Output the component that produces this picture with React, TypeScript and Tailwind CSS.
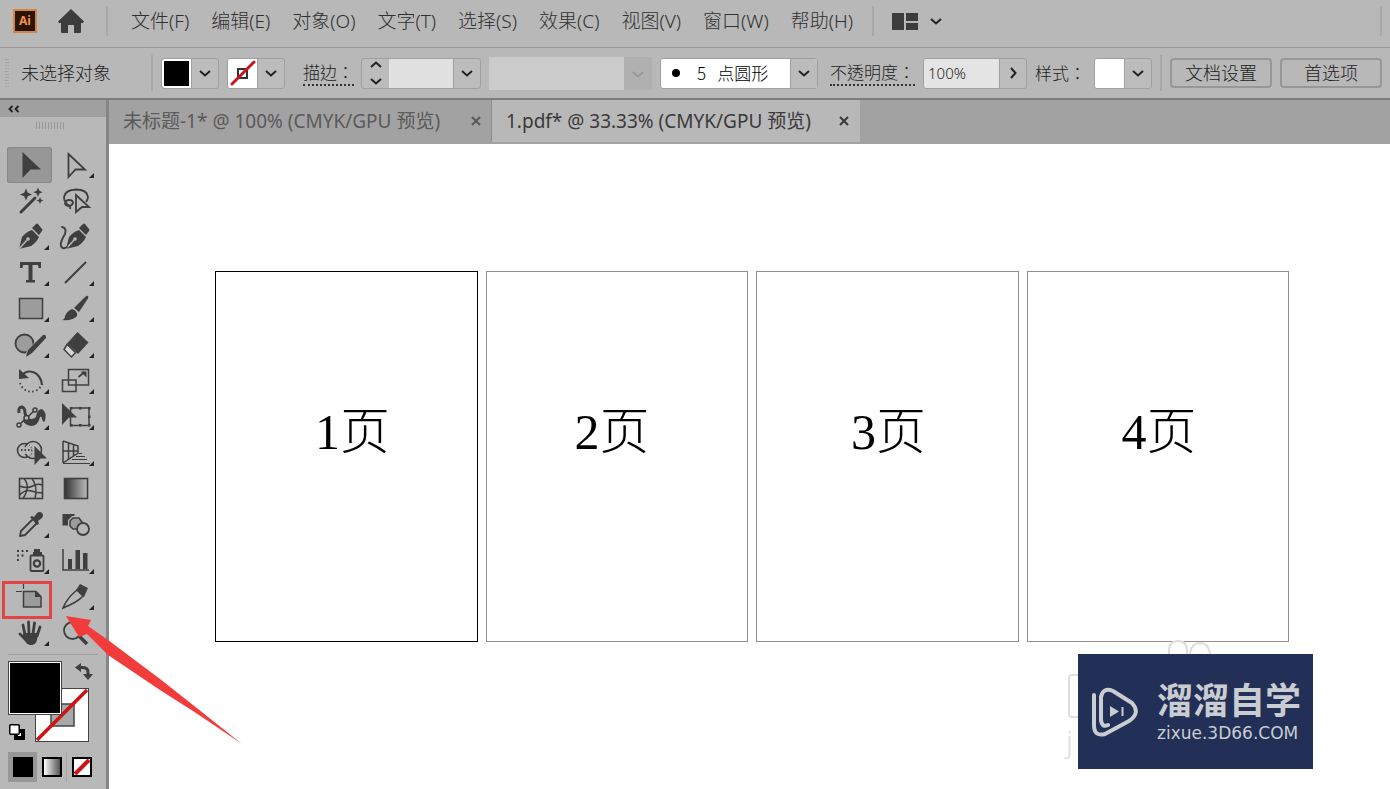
import type { ReactNode } from "react";
import { clsx } from "clsx";

const menuItems = [
  "文件(F)",
  "编辑(E)",
  "对象(O)",
  "文字(T)",
  "选择(S)",
  "效果(C)",
  "视图(V)",
  "窗口(W)",
  "帮助(H)",
];

const artboards = [
  { label: "1页", position: "left-[99px]", active: true },
  { label: "2页", position: "left-[88px]", active: false },
  { label: "3页", position: "left-[94px]", active: false },
  { label: "4页", position: "left-[94px]", active: false },
];

type Tool = { name: string; icon: ReactNode; more?: boolean };

const dark = "#3f3f3f";
const mid = "#9c9c9c";
const panel = "#b8b8b8";

const penShape = (
  <>
    <path d="M12 30 15 18Q19 13 25 11L32 18Q29 24 24 27Z" fill={dark} />
    <path d="m25 9 4-4q1-1 2 0l4 5q1 1 0 2l-3 4Z" fill={dark} />
    <path d="M12 30 20 21" stroke={panel} strokeWidth="1.5" />
    <circle cx="21" cy="20" r="1.8" fill={panel} />
  </>
);

// Every icon is drawn on a 45 x 36 cell
const tools: Tool[] = [
  {
    name: "选择工具",
    icon: <path d="M15.5 5 34 22.5H23.5L15.5 31Z" fill={dark} />,
  },
  {
    name: "直接选择工具",
    more: true,
    icon: <path d="M16.5 7 33 22.5H23.5L16.5 30Z" stroke={dark} strokeWidth="1.8" />,
  },
  {
    name: "魔棒工具",
    icon: (
      <>
        <path d="M14 29 28 15" stroke={dark} strokeWidth="3" strokeLinecap="round" />
        <path
          d="m19 5.500 1.800 4.200 4.200 1.800-4.200 1.800L19 17.500l-1.800-4.200-4.200-1.800 4.200-1.800ZM31 4.500l1.400 3.300 3.300 1.400-3.300 1.400L31 14l-1.400-3.400-3.300-1.400 3.300-1.400ZM33 14l1 2.500 2.500 1-2.500 1-1 2.500-1-2.500-2.500-1 2.500-1Z"
          fill={dark}
        />
      </>
    ),
  },
  {
    name: "套索工具",
    icon: (
      <>
        <path
          d="M18 23Q12 20 12 14 13 7 24 6.500 35 6.500 36 14 36 16 34 19M18 23q-5 0-5-3 1-3 4-3 4 0 4 3-1 3-5 3 3 0 2 3"
          stroke={dark}
          strokeWidth="1.8"
        />
        <path d="M24 12 37 24H30L24 29Z" stroke={dark} strokeWidth="1.8" />
      </>
    ),
  },
  { name: "钢笔工具", more: true, icon: penShape },
  {
    name: "曲率工具",
    icon: (
      <>
        <g transform="translate(2 0)">{penShape}</g>
        <path d="M10 8q5 1 3 7-5 8-4 12 2 4 6 1" stroke={dark} strokeWidth="2" strokeLinecap="round" />
      </>
    ),
  },
  {
    name: "文字工具",
    more: true,
    icon: <path d="M13 7H34V13H31.5L31 10H25.5V25H28V27.5H19V25H21.5V10H16L15.5 13H13Z" fill={dark} />,
  },
  {
    name: "直线段工具",
    more: true,
    icon: <path d="M13 28 34 7" stroke={dark} strokeWidth="2" />,
  },
  {
    name: "矩形工具",
    more: true,
    icon: <rect x="12.5" y="7.5" width="23" height="20" fill={mid} stroke={dark} strokeWidth="1.5" />,
  },
  {
    name: "画笔工具",
    more: true,
    icon: (
      <>
        <path d="m22 17 10-10q3-3 4-2t-1 4l-8 12Z" fill={dark} />
        <path d="M20 18q6 2 5 7-4 5-15 4 3-1 3-4 2-5 7-7Z" fill={dark} />
      </>
    ),
  },
  {
    name: "Shaper 工具",
    more: true,
    icon: (
      <>
        <circle cx="17.5" cy="16.5" r="9" fill={mid} stroke={dark} strokeWidth="1.8" />
        <path d="M38 10 22 28" stroke={panel} strokeWidth="8" />
        <path d="m36 8q3-1 3 3L25 26l-6 4 2-7Z" fill={dark} />
      </>
    ),
  },
  {
    name: "橡皮擦工具",
    more: true,
    icon: (
      <>
        <path d="M25.5 5 36.5 15.5 26 27 15 16.5Z" fill={dark} />
        <path d="m15 17.500 8.500 8-4 4.500L12 22.500Z" fill="#d6d6d6" stroke={dark} strokeWidth="1.5" />
      </>
    ),
  },
  {
    name: "旋转工具",
    more: true,
    icon: (
      <>
        <path d="M14 13q5-6 12-4 8 3 9 13" stroke={dark} strokeWidth="2.2" />
        <path d="M12 6v10l10-1Z" fill={dark} />
        <path d="M13 20a11.5 11.5 0 0 0 21 3" stroke={dark} strokeWidth="1.8" strokeDasharray="1.5 2.5" />
      </>
    ),
  },
  {
    name: "比例缩放工具",
    more: true,
    icon: (
      <>
        <path d="M16.500 6.500h20v15.500h-20ZM10.500 17h13.500v11.500h-13.500Z" stroke={dark} strokeWidth="1.5" />
        <path d="m26.500 14 6-5" stroke={dark} strokeWidth="1.8" />
        <path d="M28.500 8.500h6v6Z" fill={dark} />
      </>
    ),
  },
  {
    name: "宽度工具",
    more: true,
    icon: (
      <>
        <path d="M12 14q-1-6 3-6 3 1 3 6l2 6" stroke={dark} strokeWidth="3" />
        <path d="M18 18q7 4 11 0 1-8 6-8 5 3 3 12-2 2-3-2 0-3-2-2-2 9-9 9-6-1-8-5Z" fill={dark} />
        <path d="m13 25 14-13" stroke={dark} strokeWidth="1.6" />
        <circle cx="12" cy="26" r="2" fill={panel} stroke={dark} strokeWidth="1.5" />
        <circle cx="19.500" cy="19" r="2.500" fill={panel} stroke={dark} strokeWidth="1.5" />
        <circle cx="28" cy="11" r="2" fill={panel} stroke={dark} strokeWidth="1.5" />
      </>
    ),
  },
  {
    name: "自由变换工具",
    more: true,
    icon: (
      <>
        <rect x="18.5" y="9" width="18.500" height="17.500" stroke={dark} strokeWidth="1.5" />
        <path
          d="M18 8h2.500v2.500H18ZM27 8h2.500v2.500H27ZM36 8h2.500v2.500H36ZM36 16.500h2.500V19H36ZM36 25h2.500v2.500H36ZM27 25h2.500v2.500H27ZM18 25h2.500v2.500H18Z"
          fill={dark}
        />
        <path d="M10 4 25 18.5H17L10 26Z" fill={dark} />
      </>
    ),
  },
  {
    name: "形状生成器工具",
    more: true,
    icon: (
      <>
        <circle cx="17.5" cy="15.5" r="7" stroke={dark} strokeWidth="1.6" />
        <circle cx="26" cy="15" r="8.5" fill={panel} stroke={dark} strokeWidth="1.6" />
        <path d="M18 12q-1 3 0 7" stroke={panel} strokeWidth="3" />
        <path d="M19 9q6 1 6 7t-6 6" stroke={dark} strokeWidth="1" strokeDasharray="1.5 1.5" />
        <path d="M14 15h11" stroke={dark} strokeWidth="1.8" strokeDasharray="1.5 2" />
        <path d="M27.5 11 40 23.5H33.5L27.5 30Z" fill={dark} />
      </>
    ),
  },
  {
    name: "透视网格工具",
    more: true,
    icon: (
      <>
        <path d="M11 6v22M11 6l15 5v7L11 28M11 16h15M16.500 8v16M21.500 10v11" stroke={dark} strokeWidth="1.5" />
        <path d="M27 18.500h3M24 21.500h9M20 24.500h15M11 28.500h27" stroke={dark} strokeWidth="1" />
      </>
    ),
  },
  {
    name: "网格工具",
    icon: (
      <>
        <rect x="12.5" y="7.5" width="23" height="20" stroke={dark} strokeWidth="1.6" />
        <path
          d="M17 7.500q7 8-1 20M25 7.500q6 8 3 20M12.500 15q8 3 13 0t10-1M12.500 24q6-6 12-4t11 2"
          stroke={dark}
          strokeWidth="1.5"
        />
      </>
    ),
  },
  {
    name: "渐变工具",
    icon: (
      <>
        <defs>
          <linearGradient id="toolGradient">
            <stop offset="0" stopColor="#333333" />
            <stop offset="1" stopColor="#bdbdbd" />
          </linearGradient>
        </defs>
        <rect x="12.5" y="7.5" width="23" height="20" fill="url(#toolGradient)" stroke={dark} strokeWidth="1.6" />
      </>
    ),
  },
  {
    name: "吸管工具",
    more: true,
    icon: (
      <>
        <path d="m26 12-12 12-1 5 5-1 12-12" stroke={dark} strokeWidth="1.8" strokeLinejoin="round" />
        <path d="m23 10 2-1 2 1 3-4q3-2 5 0t0 5l-4 3 1 3-2 1Z" fill={dark} />
      </>
    ),
  },
  {
    name: "混合工具",
    icon: (
      <>
        <rect x="10.5" y="7" width="12" height="11.5" fill={dark} />
        <path d="m21 11 6 0 3 4v4l-3 3h-6l-3-3v-5Z" fill={mid} stroke={panel} strokeWidth="4" />
        <path d="m21 11 6 0 3 4v4l-3 3h-6l-3-3v-5Z" fill={mid} stroke={dark} strokeWidth="1.5" />
        <circle cx="31" cy="22" r="6" fill={panel} stroke={dark} strokeWidth="1.8" />
      </>
    ),
  },
  {
    name: "符号喷枪工具",
    more: true,
    icon: (
      <>
        <path
          d="M10 7h2v2h-2ZM14.500 7h2v2h-2ZM19 7h2v2h-2ZM10 11.500h2v2h-2ZM14.500 11.500h2v2h-2ZM10 16h2v2h-2Z"
          fill={dark}
        />
        <path d="M27 6h6v3h2v3h-9V9h1Z" fill={dark} />
        <rect x="23.5" y="12.5" width="13" height="15.5" rx="1" stroke={dark} strokeWidth="1.8" />
        <circle cx="30" cy="20.5" r="3.2" stroke={dark} strokeWidth="2.2" />
      </>
    ),
  },
  {
    name: "柱形图工具",
    more: true,
    icon: (
      <>
        <path d="M11 6v21h26" stroke={dark} strokeWidth="1.5" />
        <path d="M16 16h4v10h-4ZM23.500 7h4.500v19h-4.500ZM31 10h4.500v16H31Z" fill={dark} />
      </>
    ),
  },
  {
    name: "画板工具",
    icon: (
      <>
        <path d="M16.500 4v6M9 12.500h6" stroke={dark} strokeWidth="1.2" />
        <path d="M16.500 12.500H29l5 5v10.500H16.500Z" fill={mid} stroke={dark} strokeWidth="1.5" />
        <path d="M28 12v6h6.500Z" fill={dark} />
      </>
    ),
  },
  {
    name: "切片工具",
    more: true,
    icon: (
      <>
        <path d="m25 11 6 6q-5 6-20 12 4-10 14-18Z" stroke={dark} strokeWidth="1.6" />
        <path d="m24 11 4-6 8 4-4 9Z" fill={dark} />
      </>
    ),
  },
  {
    name: "抓手工具",
    more: true,
    icon: (
      <>
        <path
          d="m18 20-2-10M22 19 21.500 7M26 19l1.500-11M30 21l3-9M19 25l-6-6"
          stroke={dark}
          strokeWidth="2.8"
          strokeLinecap="round"
        />
        <path d="M17 18h14l-1 7q-1 5-6 5-4 0-6-4l-3-4Z" fill={dark} />
      </>
    ),
  },
  {
    name: "缩放工具",
    icon: (
      <>
        <circle cx="20.5" cy="15.5" r="8.5" stroke={dark} strokeWidth="1.8" />
        <path d="m27 21 8 8" stroke={dark} strokeWidth="3.5" />
      </>
    ),
  },
];

function Chevron({ className }: { className?: string }) {
  return (
    <svg viewBox="0 0 12 12" className={clsx("w-3 h-3 shrink-0", className)} fill="none">
      <path d="m1 4 5 4.500L11 4" stroke="currentColor" strokeWidth="2" />
    </svg>
  );
}

function ArrowButton({ label, className }: { label: string; className?: string }) {
  return (
    <button
      aria-label={label}
      className="w-[27px] h-full shrink-0 flex items-center justify-center border-l border-[#a0a0a0] text-[#222222]"
    >
      <Chevron className={className} />
    </button>
  );
}

function Divider({ className }: { className?: string }) {
  return <span className={clsx("w-[2px] shrink-0 bg-[#a8a8a8]", className)} />;
}

const boxClassName =
  "flex items-center h-[31px] border border-[#a0a0a0] rounded-[3px] bg-[#bcbcbc] shrink-0 overflow-hidden";

const labelClassName = "text-[17px] font-['Noto_Sans_CJK_TC',sans-serif]";

function MenuBar() {
  return (
    <header className="flex items-center h-12 pb-[5px] border-b border-[#999999]">
      <div className="ml-[13px] w-6 h-6 shrink-0 flex items-center justify-center border-2 border-[#d28645] bg-[#2c1403] text-[#f0924a] text-[12px] leading-none font-bold">
        Ai
      </div>
      <button aria-label="主页" className="ml-[21px]">
        <svg viewBox="0 0 26 24" className="w-[26px] h-6">
          <path d="M13 0 26 12.500 25 14H23v9q0 1-1 1H16v-8h-6v8H4q-1 0-1-1v-9H1L0 12.500Z" fill="#3c3c3c" />
        </svg>
      </button>
      <Divider className="h-[30px] ml-[22px]" />
      <nav className="flex gap-[22px] ml-[23px] text-[19px] leading-6 text-[#303030] whitespace-nowrap">
        {menuItems.map((item) => (
          <button key={item}>{item}</button>
        ))}
      </nav>
      <Divider className="h-[30px] ml-[19px]" />
      <button aria-label="排列文档" className="flex items-center gap-3 ml-[18px] text-[#222222]">
        <svg viewBox="0 0 26 17" className="w-[26px] h-[17px]">
          <path d="M0 0h12v17H0ZM14 0h12v8H14ZM14 10h12v7H14Z" fill="#3c3c3c" />
        </svg>
        <Chevron />
      </button>
      <Divider className="h-[30px] ml-auto mr-2" />
    </header>
  );
}

function ControlBar() {
  return (
    <section className="flex items-center h-[52px] border-b-2 border-[#7c7c7c] text-[#222222] text-[18px] leading-6 whitespace-nowrap">
      <span className="w-1 h-7 ml-[5px] shrink-0 bg-[repeating-linear-gradient(#a4a4a4_0_1px,transparent_1px_3px)]" />
      <span className="ml-3 w-[91px]">未选择对象</span>
      <Divider className="h-9 ml-[39px]" />

      <div className={clsx(boxClassName, "ml-2 w-[58px]")}>
        <button aria-label="填色" className="flex-1 h-full bg-black border-2 border-white" />
        <ArrowButton label="填色选项" />
      </div>
      <div className={clsx(boxClassName, "ml-2 w-[58px]")}>
        <button aria-label="描边颜色" className="flex-1 h-full bg-white">
          <svg viewBox="0 0 29 29" className="w-full h-full" fill="none">
            <rect x="10" y="10" width="9" height="9" stroke="#333333" strokeWidth="2" />
            <path d="M4 25 26 3" stroke="#c4161c" strokeWidth="3" strokeLinecap="round" />
          </svg>
        </button>
        <ArrowButton label="描边颜色选项" />
      </div>

      <label
        htmlFor="strokeWidth"
        className={clsx(labelClassName, "ml-[18px] border-b-2 border-dotted border-[#333333]")}
      >
        描边：
      </label>
      <div className={clsx(boxClassName, "ml-[7px] w-[120px]")}>
        <div className="flex flex-col items-center justify-center gap-1 w-[27px]">
          <button aria-label="增加描边粗细">
            <Chevron className="rotate-180" />
          </button>
          <button aria-label="减少描边粗细">
            <Chevron />
          </button>
        </div>
        <input id="strokeWidth" className="flex-1 min-w-0 h-full bg-[#e1e1e1]" />
        <ArrowButton label="描边粗细选项" />
      </div>

      <div className="relative ml-2 shrink-0 w-[163px]">
        <select
          disabled
          aria-label="变量宽度配置文件"
          className="appearance-none block w-full h-[33px] bg-[#cbcbcb] border-r-[28px] border-[#b0b0b0]"
        />
        <Chevron className="absolute right-2 top-[11px] text-[#999999]" />
      </div>

      <div className={clsx(boxClassName, "ml-2 w-[158px] bg-white")}>
        <span className="w-2 h-2 ml-[11px] shrink-0 rounded-full bg-black" />
        <select
          aria-label="画笔定义"
          className="appearance-none flex-1 min-w-0 h-full pl-[17px] bg-white text-black text-[17px] leading-6 font-['Noto_Sans_CJK_SC',sans-serif]"
        >
          <option>5&nbsp;&nbsp; 点圆形</option>
        </select>
        <span className="h-full bg-[#bcbcbc]">
          <ArrowButton label="画笔选项" />
        </span>
      </div>

      <label
        htmlFor="opacity"
        className={clsx(labelClassName, "ml-3 border-b-2 border-dotted border-[#333333]")}
      >
        不透明度：
      </label>
      <div className={clsx(boxClassName, "ml-2 w-[104px]")}>
        <input
          id="opacity"
          defaultValue="100%"
          className="flex-1 min-w-0 h-full pl-1 bg-[#e4e4e4] text-[15px]"
        />
        <ArrowButton label="不透明度选项" className="-rotate-90" />
      </div>

      <span className={clsx(labelClassName, "ml-2")}>样式：</span>
      <div className={clsx(boxClassName, "ml-2 w-[58px]")}>
        <button aria-label="图形样式" className="flex-1 h-full bg-white" />
        <ArrowButton label="图形样式选项" />
      </div>
      <Divider className="h-9 ml-2" />
      <button className="w-[102px] h-[30px] ml-2 shrink-0 border-2 border-[#979797] rounded-[4px] leading-6">
        文档设置
      </button>
      <button className="w-[102px] h-[30px] ml-2 shrink-0 border-2 border-[#979797] rounded-[4px] leading-6">
        首选项
      </button>
    </section>
  );
}

function ToolPanel() {
  return (
    <aside className="w-[109px] shrink-0 border-r-[3px] border-[#858585]">
      <div className="h-[17px] bg-[#a0a0a0] flex items-center pl-2">
        <button aria-label="折叠面板">
          <svg viewBox="0 0 12 8" className="w-3 h-2" fill="none">
            <path d="M4.500 1 1.500 4l3 3M10.500 1l-3 3 3 3" stroke="#222222" strokeWidth="1.8" />
          </svg>
        </button>
      </div>
      <div className="h-[30px] pt-[5px] pl-9">
        <div className="w-[30px] h-[7px] bg-[repeating-linear-gradient(90deg,#989898_0_1px,transparent_1px_3px)]" />
      </div>

      <div className="grid grid-cols-[45px_45px] ml-[7px]">
        {tools.map((tool, index) => (
          <button
            key={tool.name}
            aria-label={tool.name}
            className={clsx(
              "relative h-9",
              index === 0 && "bg-[#979797] rounded-[3px] ring-1 ring-inset ring-[#888888]"
            )}
          >
            <svg viewBox="0 0 45 36" className="w-[45px] h-9" fill="none">
              {tool.icon}
              {tool.more && <path d="M42 26v5h-5Z" fill="#222222" />}
            </svg>
            {tool.name === "画板工具" && (
              <span className="absolute -left-[5px] top-[2px] w-[50px] h-[38px] border-[3px] border-[#e24343]" />
            )}
          </button>
        ))}
      </div>

      <div className="mt-[3px] mx-2 border-t border-[#a0a0a0]" />

      <div className="relative mt-[6px] ml-2 h-[81px]">
        <button
          aria-label="描边"
          className="absolute left-[27px] top-[27px] w-[54px] h-[54px] bg-white border border-[#444444]"
        >
          <svg viewBox="0 0 52 52" className="w-full h-full" fill="none">
            <rect x="15" y="15" width="23" height="22" fill="#a8a8a8" stroke="#444444" strokeWidth="1.5" />
            <path d="M1 51 51 1" stroke="#cc1417" strokeWidth="3.5" />
          </svg>
        </button>
        <button
          aria-label="填色"
          className="absolute left-0 top-0 w-[54px] h-[54px] bg-black border border-[#444444] ring-1 ring-inset ring-white"
        />
        <button aria-label="互换填色和描边" className="absolute left-[67px] top-[2px]">
          <svg viewBox="0 0 18 17" className="w-[18px] h-[17px]" fill="none">
            <path d="M5 4.500h3q5 0 5 5v2" stroke={dark} strokeWidth="3" />
            <path d="M0 4.500 6 0v9ZM8 11h10l-5 6Z" fill={dark} />
          </svg>
        </button>
        <button aria-label="默认填色和描边" className="absolute left-[1px] top-[63px]">
          <svg viewBox="0 0 16 16" className="w-4 h-4">
            <path d="M5 5h11v11H5Z" fill="black" />
            <path d="M9 9h3v3H9Z" fill="white" />
            <rect x="0.75" y="0.75" width="9.5" height="9.5" rx="1" fill="white" stroke="black" strokeWidth="1.5" />
          </svg>
        </button>
      </div>

      <div className="flex mt-[10px] ml-2">
        <button aria-label="颜色" className="w-[29px] h-[30px] flex items-center justify-center bg-[#979797]">
          <span className="w-5 h-5 bg-black" />
        </button>
        <button aria-label="渐变" className="w-[30px] h-[30px] flex items-center justify-center border-r border-[#a8a8a8]">
          <span className="w-5 h-5 border-2 border-black bg-linear-to-r from-white to-[#555555]" />
        </button>
        <button aria-label="无" className="w-[30px] h-[30px] flex items-center justify-center">
          <svg viewBox="0 0 20 20" className="w-5 h-5">
            <rect x="1" y="1" width="18" height="18" fill="white" stroke="black" strokeWidth="2" />
            <path d="M3 17 17 3" stroke="#cc1417" strokeWidth="4" />
          </svg>
        </button>
      </div>
    </aside>
  );
}

function CloseIcon() {
  return (
    <svg viewBox="0 0 10 10" className="w-[10px] h-[10px]" fill="none">
      <path d="m1 1 8 8M9 1 1 9" stroke="currentColor" strokeWidth="2" />
    </svg>
  );
}

function DocumentTabs() {
  return (
    <div className="flex h-11 pb-[2px] bg-[#a2a2a2] text-[19px] leading-6 font-normal whitespace-nowrap">
      <div className="w-[382px] pl-[14px] pr-[10px] flex items-center justify-between text-[#5a5a5a]">
        <button>未标题-1* @ 100% (CMYK/GPU 预览)</button>
        <button aria-label="关闭 未标题-1">
          <CloseIcon />
        </button>
      </div>
      <div className="w-[369px] pl-[14px] pr-[11px] flex items-center justify-between bg-[#b8b8b8] border-l border-[#8e8e8e] text-[#3a3a3a]">
        <button>1.pdf* @ 33.33% (CMYK/GPU 预览)</button>
        <button aria-label="关闭 1.pdf">
          <CloseIcon />
        </button>
      </div>
    </div>
  );
}

function Watermark() {
  return (
    <div className="absolute right-[77px] bottom-5">
      <svg viewBox="0 0 150 120" className="absolute -left-3 -top-[15px] w-[150px] h-[120px]" fill="none">
        <path
          d="M103 20V12q0-10 9-10t9 10v8M124 20V14q2-10 10-10t10 10v6M30 36H6q-3 0-3 3v36q0 3 3 3h24"
          stroke="#dddddd"
          strokeWidth="2"
        />
      </svg>
      <span className="absolute -left-3 top-[69px] text-[30px] leading-9 text-[#dddddd]">j</span>
      <div className="relative w-[235px] h-[115px] pl-[14px] flex items-center gap-[18px] bg-[#222f56] text-[#c9cdd2]">
        <svg viewBox="0 0 47 50" className="w-[47px] h-[50px] shrink-0" fill="none">
          <path
            d="M2 8v30q0 12 11 9l24-13q12-8 3-18L21 4Q11 0 9 10v23q1 8 7 5"
            stroke="currentColor"
            strokeWidth="4"
            strokeLinejoin="round"
            strokeLinecap="round"
          />
          <path d="M18 19v11l9-5.500Z" fill="currentColor" />
          <path d="M30.500 20v9" stroke="currentColor" strokeWidth="2" />
        </svg>
        <div className="flex flex-col gap-[6px]">
          <span className="text-[36px] leading-9 font-bold">溜溜自学</span>
          <span className="text-[17px] leading-4 font-normal font-['DejaVu_Sans',sans-serif]">zixue.3D66.COM</span>
        </div>
      </div>
    </div>
  );
}

export default function App() {
  return (
    <div className="relative min-h-screen flex flex-col bg-[#b8b8b8] font-light font-['Noto_Sans','Noto_Sans_CJK_SC',sans-serif]">
      <MenuBar />
      <ControlBar />

      <div className="flex flex-1">
        <ToolPanel />
        <div className="flex flex-col flex-1 min-w-0">
          <DocumentTabs />
          <main className="relative flex-1 bg-white pt-[127px] pl-[106px] pr-[101px]">
            <div className="grid grid-cols-4 gap-2">
              {artboards.map((board) => (
                <div
                  key={board.label}
                  className={clsx(
                    "relative h-[371px] border",
                    board.active ? "border-black" : "border-[#8f8f8f]"
                  )}
                >
                  <p
                    className={clsx(
                      "absolute top-[130px] text-[50px] leading-[60px] text-black font-['Liberation_Serif','Noto_Sans_CJK_SC',serif]",
                      board.position
                    )}
                  >
                    {board.label}
                  </p>
                </div>
              ))}
            </div>
            <Watermark />
          </main>
        </div>
      </div>

      {/* Arrow pointing at the artboard tool */}
      <svg
        viewBox="0 0 178 130"
        className="absolute left-[66px] top-[615px] w-[178px] h-[130px] pointer-events-none"
      >
        <path d="M0 1 25 5 22 11 42 25 94 64 127 90 176 129 127 96 94 75 42 40 21 19 13 22Z" fill="#f23c3c" />
      </svg>
    </div>
  );
}
